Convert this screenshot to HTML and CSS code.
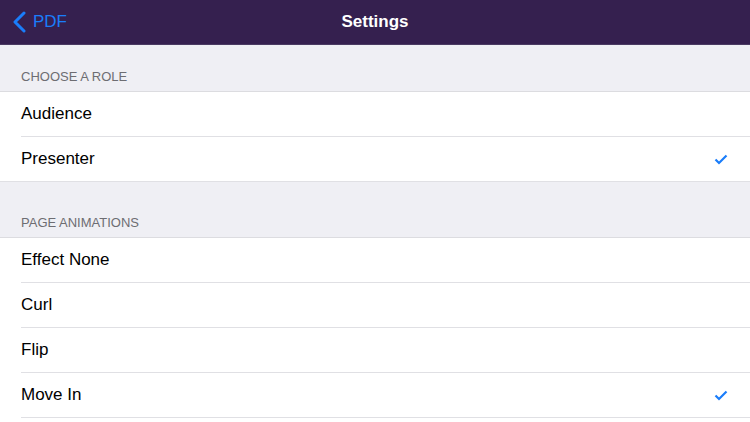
FILE: index.html
```html
<!DOCTYPE html>
<html lang="en">
<head>
    <meta charset="UTF-8">
    <meta name="viewport" content="width=device-width, initial-scale=1.0">
    <title>Settings</title>
    <link rel="stylesheet" href="styles.css">
</head>
<body>

    <div class="navbar">
        <div class="back">
            <svg class="chevron" width="13" height="22" viewBox="0 0 13 22">
                <path d="M11 2 L2 11 L11 20" fill="none" stroke="#1a7dfa" stroke-width="3" stroke-linecap="round" stroke-linejoin="round"/>
            </svg>
            <span>PDF</span>
        </div>
        <div class="title">Settings</div>
    </div>

    <div class="section-header">CHOOSE A ROLE</div>
    <div class="group closed">
        <div class="row"><span>Audience</span></div>
        <div class="row"><span>Presenter</span><svg class="check" width="14" height="11" viewBox="0 0 14 11"><path d="M1.5 5.5 L5 9 L12.5 1.5" fill="none" stroke="#1a7dfa" stroke-width="2.2"/></svg></div>
    </div>

    <div class="section-header">PAGE ANIMATIONS</div>
    <div class="group">
        <div class="row"><span>Effect None</span></div>
        <div class="row"><span>Curl</span></div>
        <div class="row"><span>Flip</span></div>
        <div class="row"><span>Move In</span><svg class="check" width="14" height="11" viewBox="0 0 14 11"><path d="M1.5 5.5 L5 9 L12.5 1.5" fill="none" stroke="#1a7dfa" stroke-width="2.2"/></svg></div>
    </div>

</body>
</html>
```

FILE: styles.css
```css
body {
    margin: 0;
    font-family: "Liberation Sans", Arial, sans-serif;
    background-color: #efeff4;
    color: #000;
    height: 100vh;
    display: flex;
    flex-direction: column;
    overflow: hidden;
}

.navbar {
    height: 44px;
    flex-shrink: 0;
    background-color: #35204f;
    border-bottom: 1px solid #4a3a62;
    display: flex;
    align-items: center;
    justify-content: center;
    position: relative;
}

.title {
    color: #fff;
    font-size: 17px;
    font-weight: bold;
}

.back {
    position: absolute;
    left: 13px;
    top: 0;
    height: 44px;
    display: flex;
    align-items: center;
    gap: 7px;
    color: #1a7dfa;
    font-size: 17px;
}

.section-header {
    height: 46px;
    flex-shrink: 0;
    box-sizing: border-box;
    padding: 24px 0 0 21px;
    font-size: 13px;
    color: #6d6d72;
}

.group {
    background-color: #fff;
    border-top: 1px solid #dcdce0;
    margin-bottom: 9px;
    flex-shrink: 0;
}

.group:last-child {
    margin-bottom: 0;
    flex: 1;
}

.row {
    height: 44px;
    margin-left: 21px;
    padding-right: 22px;
    display: flex;
    align-items: center;
    justify-content: space-between;
    font-size: 17px;
    border-bottom: 1px solid #e0e0e4;
}

.closed .row:last-child {
    margin-left: 0;
    padding-left: 21px;
}

.check {
    display: block;
}
```
